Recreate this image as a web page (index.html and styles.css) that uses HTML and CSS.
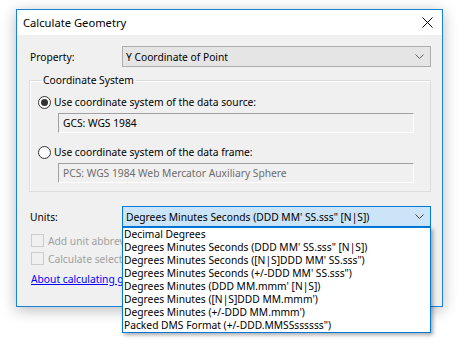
FILE: index.html
```html
<!DOCTYPE html>
<html lang="en">
<head>
    <meta charset="UTF-8">
    <title>Calculate Geometry</title>
    <link rel="stylesheet" href="styles.css">
</head>
<body>
    <div class="window">
        <div class="titlebar">
            <span class="title">Calculate Geometry</span>
            <svg class="close" width="11" height="11" viewBox="0 0 11 11">
                <path d="M0.5 0.5 L10.5 10.5 M10.5 0.5 L0.5 10.5" stroke="#000" stroke-width="1"/>
            </svg>
        </div>

        <div class="content">
            <div class="row">
                <label class="row-label">Property:</label>
                <div class="combo">
                    <span>Y Coordinate of Point</span>
                    <svg class="chevron" width="9" height="5" viewBox="0 0 9 5">
                        <polyline points="0.5,0.5 4.5,4.5 8.5,0.5" fill="none" stroke="#606060"/>
                    </svg>
                </div>
            </div>

            <fieldset class="group">
                <legend>Coordinate System</legend>
                <div class="radio-row first">
                    <span class="radio checked"></span>
                    <span>Use coordinate system of the data source:</span>
                </div>
                <div class="textbox">GCS: WGS 1984</div>
                <div class="radio-row">
                    <span class="radio"></span>
                    <span>Use coordinate system of the data frame:</span>
                </div>
                <div class="textbox disabled">PCS: WGS 1984 Web Mercator Auxiliary Sphere</div>
            </fieldset>

            <div class="row units">
                <label class="row-label">Units:</label>
                <div class="combo-wrap">
                    <div class="combo focused">
                        <span>Degrees Minutes Seconds (DDD MM' SS.sss" [N|S])</span>
                        <svg class="chevron" width="9" height="5" viewBox="0 0 9 5">
                            <polyline points="0.5,0.5 4.5,4.5 8.5,0.5" fill="none" stroke="#404040"/>
                        </svg>
                    </div>
                    <ul class="dropdown">
                        <li>Decimal Degrees</li>
                        <li>Degrees Minutes Seconds (DDD MM' SS.sss" [N|S])</li>
                        <li>Degrees Minutes Seconds ([N|S]DDD MM' SS.sss")</li>
                        <li>Degrees Minutes Seconds (+/-DDD MM' SS.sss")</li>
                        <li>Degrees Minutes (DDD MM.mmm' [N|S])</li>
                        <li>Degrees Minutes ([N|S]DDD MM.mmm')</li>
                        <li>Degrees Minutes (+/-DDD MM.mmm')</li>
                        <li>Packed DMS Format (+/-DDD.MMSSssssss")</li>
                    </ul>
                </div>
            </div>

            <div class="check-row first">
                <span class="checkbox"></span>
                <span>Add unit abbreviations</span>
            </div>
            <div class="check-row">
                <span class="checkbox"></span>
                <span>Calculate selected records only</span>
            </div>

            <a class="help-link" href="#">About calculating geometry</a>
        </div>
    </div>
</body>
</html>
```

FILE: styles.css
```css
* {
    margin: 0;
    padding: 0;
    box-sizing: border-box;
}

html,
body {
    min-height: 100vh;
}

body {
    font-family: "Noto Sans", "Open Sans", sans-serif;
    font-size: 10.25px;
    color: #000;
    background: #fff;
    padding-top: 9px;
}

.window {
    margin-left: 16px;
    width: 427px;
    height: 298px;
    border: 1px solid #1883d7;
    background: #f0f0f0;
    box-shadow: 0 3px 14px rgba(0, 0, 0, 0.28);
    display: flex;
    flex-direction: column;
}

.titlebar {
    height: 25px;
    background: #fff;
    display: flex;
    align-items: center;
    justify-content: space-between;
    padding: 0 9px 0 6px;
}

.title {
    font-size: 11.2px;
}

.close {
    display: block;
}

.content {
    flex: 1;
    padding: 11px 11px 0 12px;
}

.row {
    display: flex;
    align-items: center;
    height: 21px;
}

.row-label {
    width: 93px;
    padding-left: 1px;
}

.combo-wrap {
    position: relative;
    flex: 1;
}

.combo {
    flex: 1;
    height: 21px;
    display: flex;
    align-items: center;
    justify-content: space-between;
    padding: 0 6px 0 3px;
    background: #e5e5e5;
    border: 1px solid #adadad;
}

.combo.focused {
    background: #cce4f7;
    border-color: #0078d7;
}

.chevron {
    display: block;
}

.group {
    margin-top: 6px;
    border: 1px solid #dcdcdc;
    box-shadow: inset 1px 1px 0 #fff;
    padding: 0 8px 8px 8px;
}

.group legend {
    margin-left: 3px;
    padding: 0 2px;
    line-height: 14px;
}

.radio-row {
    display: flex;
    align-items: center;
    gap: 3px;
    height: 14px;
    margin-top: 12px;
}

.radio-row.first {
    margin-top: 8px;
}

.radio {
    width: 13px;
    height: 13px;
    border: 1px solid #333;
    border-radius: 50%;
    background: #fff;
    display: flex;
    align-items: center;
    justify-content: center;
}

.radio.checked::after {
    content: "";
    width: 7px;
    height: 7px;
    border-radius: 50%;
    background: #333;
}

.textbox {
    margin: 4px 8px 0 20px;
    height: 20px;
    line-height: 18px;
    padding-left: 4px;
    border-top: 1px solid #a0a0a0;
    border-left: 1px solid #a0a0a0;
    border-right: 1px solid #fff;
    border-bottom: 1px solid #fff;
}

.textbox.disabled {
    color: #6d6d6d;
}

.units {
    margin-top: 14px;
}

.units .combo {
    width: 100%;
}

.dropdown {
    position: absolute;
    top: 100%;
    left: 0;
    right: 0;
    list-style: none;
    background: #fff;
    border: 1px solid #0078d7;
    box-shadow: 2px 2px 4px rgba(0, 0, 0, 0.35);
    z-index: 2;
}

.dropdown li {
    height: 13px;
    line-height: 13px;
    padding-left: 1px;
    white-space: nowrap;
}

.check-row {
    display: flex;
    align-items: center;
    gap: 4px;
    height: 13px;
    margin-top: 5px;
    padding-left: 2px;
    color: #a0a0a0;
}

.check-row.first {
    margin-top: 7px;
}

.checkbox {
    width: 13px;
    height: 13px;
    border: 1px solid #cccccc;
}

.help-link {
    display: inline-block;
    margin-top: 7px;
    padding-left: 2px;
    line-height: 14px;
    color: #0000ff;
    text-decoration: underline;
}
```
